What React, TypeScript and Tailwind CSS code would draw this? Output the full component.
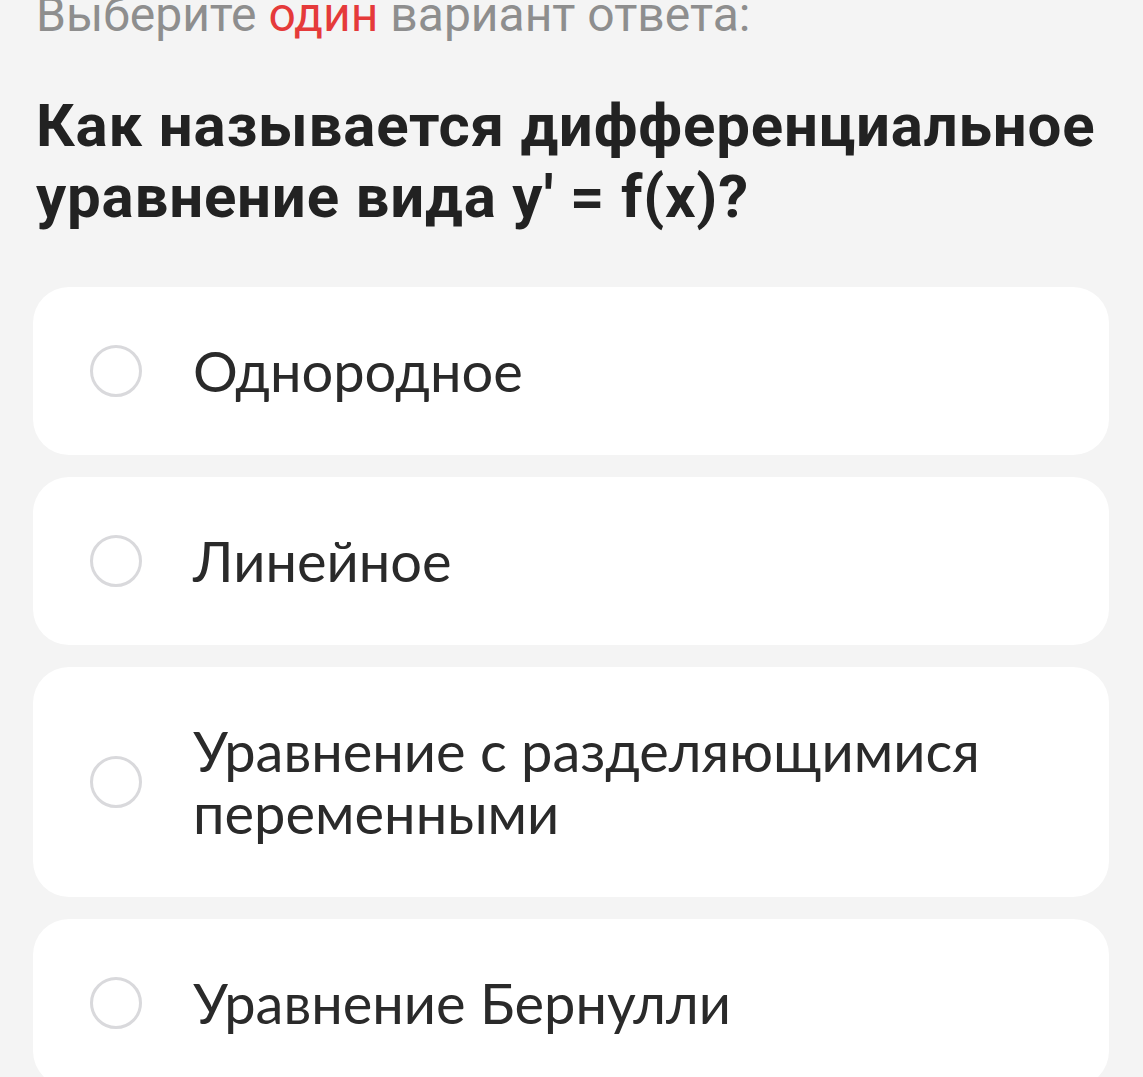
const options = [
  'Однородное',
  'Линейное',
  'Уравнение с разделяющимися переменными',
  'Уравнение Бернулли',
];

function Radio() {
  return (
    <span className="shrink-0 w-[52px] h-[52px] rounded-full border-[3px] border-[#d9d9dc] bg-white" />
  );
}

export default function App() {
  return (
    <div className="h-[1077px] overflow-hidden bg-[#f4f4f4] font-['Roboto',sans-serif]">
      <div className="pl-[36px] pr-[33px]">
        <p className="-mt-[13px] text-[48px] leading-[56px] text-[#8e8e8e] font-['Roboto',sans-serif] whitespace-nowrap">
          Выберите <span className="text-[#e53a3a]">один</span> вариант ответа:
        </p>

        <h1 className="mt-[47px] text-[60px] leading-[71px] font-bold text-[#222] tracking-[0.8px] font-['Roboto',sans-serif]">
          Как называется дифференциальное уравнение вида y' = f(x)?
        </h1>
      </div>

      <div className="mt-[55px] pl-[33px] pr-[34px] flex flex-col gap-[22px]">
        {options.map((text) => (
          <div
            key={text}
            className="bg-white rounded-[36px] flex items-center gap-[51px] pl-[57px] pr-[40px] py-[53px]"
          >
            <Radio />
            <span className="text-[56px] leading-[62px] text-[#2a2a2a] font-['Lato',sans-serif]">
              {text}
            </span>
          </div>
        ))}
      </div>
    </div>
  );
}
